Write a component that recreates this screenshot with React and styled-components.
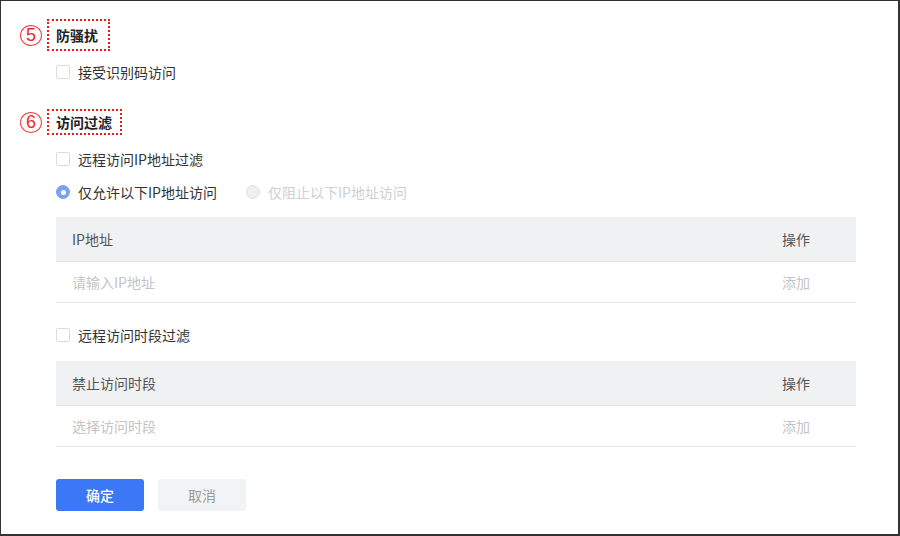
import React from "react";
import styled, { createGlobalStyle } from "styled-components";

const Global = createGlobalStyle`
  html, body { margin: 0; padding: 0; background: #fff; }
  body { font-family: "Noto Sans CJK SC", "Liberation Sans", sans-serif; }
  * { box-sizing: border-box; }
`;

const Frame = styled.div`
  width: 900px;
  height: 536px;
  border-style: solid;
  border-color: #333;
  border-width: 1px 2px 2px 1px;
  background: #fff;
  padding: 18px 0 0 19px;
  overflow: hidden;
`;

const SectionHead = styled.div`
  display: flex;
  align-items: center;
  gap: 5px;
  margin-top: ${(p) => p.$mt || 0}px;
`;

const Num = styled.span`
  width: 22px;
  height: 21px;
  border: 1px solid #f43c3c;
  border-radius: 50%;
  color: #f02828;
  font-family: "Liberation Sans", sans-serif;
  font-size: 18px;
  line-height: 19px;
  display: flex;
  align-items: center;
  justify-content: center;
`;

const TitleBox = styled.div`
  border: 2px dotted #f01818;
  height: ${(p) => p.$h}px;
  padding: 0 ${(p) => p.$pr}px 0 7px;
  display: flex;
  align-items: center;
  font-size: 14px;
  font-weight: 700;
  color: #222;
`;

const Body = styled.div`
  margin-left: 36px;
  width: 800px;
`;

const OptionRow = styled.div`
  display: flex;
  align-items: center;
  height: 20px;
  margin-top: ${(p) => p.$mt || 0}px;
  font-size: 14px;
  color: #333;
`;

const Option = styled.label`
  display: flex;
  align-items: center;
  gap: 8px;
  margin-right: 29px;
  color: ${(p) => (p.$disabled ? "#cfcfcf" : "#333")};
`;

const Check = styled.span`
  width: 14px;
  height: 14px;
  border: 1px solid #dcdcdc;
  border-radius: 2px;
  background: #fff;
`;

const Radio = styled.span`
  width: 14px;
  height: 14px;
  border-radius: 50%;
  display: flex;
  align-items: center;
  justify-content: center;
  background: ${(p) => (p.$on ? "#7aa2f2" : "#efefef")};
  border: 1px solid ${(p) => (p.$on ? "#7aa2f2" : "#e2e2e2")};
  &::after {
    content: "";
    width: 5px;
    height: 5px;
    border-radius: 50%;
    background: ${(p) => (p.$on ? "#fff" : "transparent")};
  }
`;

const Table = styled.div`
  margin-top: ${(p) => p.$mt}px;
  font-size: 14px;
`;

const Row = styled.div`
  display: grid;
  grid-template-columns: 1fr 74px;
  align-items: center;
  height: ${(p) => (p.$head ? 45 : 41)}px;
  padding-left: 16px;
  padding-bottom: 1px;
  background: ${(p) => (p.$head ? "#f0f1f3" : "#fff")};
  border-bottom: 1px solid #e3e4e6;
  color: ${(p) => (p.$head ? "#555" : "#c4c4c4")};
`;

const Actions = styled.div`
  display: flex;
  gap: 14px;
  margin-top: ${(p) => p.$mt}px;
`;

const Button = styled.button`
  width: 88px;
  height: 32px;
  border: none;
  border-radius: 3px;
  font-family: inherit;
  font-size: 14px;
  background: ${(p) => (p.$primary ? "#3b78f6" : "#f2f3f5")};
  color: ${(p) => (p.$primary ? "#fff" : "#9a9a9a")};
  font-weight: ${(p) => (p.$primary ? 500 : 400)};
  padding: 0;
`;

export default function App() {
  return (
    <>
      <Global />
      <Frame>
        <SectionHead>
          <Num>5</Num>
          <TitleBox $h={32} $pr={10}>防骚扰</TitleBox>
        </SectionHead>
        <Body>
          <OptionRow $mt={11}>
            <Option>
              <Check />
              接受识别码访问
            </Option>
          </OptionRow>
        </Body>

        <SectionHead $mt={27}>
          <Num>6</Num>
          <TitleBox $h={26} $pr={8}>访问过滤</TitleBox>
        </SectionHead>
        <Body>
          <OptionRow $mt={14}>
            <Option>
              <Check />
              远程访问IP地址过滤
            </Option>
          </OptionRow>
          <OptionRow $mt={13}>
            <Option>
              <Radio $on />
              仅允许以下IP地址访问
            </Option>
            <Option $disabled>
              <Radio />
              仅阻止以下IP地址访问
            </Option>
          </OptionRow>
          <Table $mt={15}>
            <Row $head>
              <span>IP地址</span>
              <span>操作</span>
            </Row>
            <Row>
              <span>请输入IP地址</span>
              <span>添加</span>
            </Row>
          </Table>
          <OptionRow $mt={22}>
            <Option>
              <Check />
              远程访问时段过滤
            </Option>
          </OptionRow>
          <Table $mt={16}>
            <Row $head>
              <span>禁止访问时段</span>
              <span>操作</span>
            </Row>
            <Row>
              <span>选择访问时段</span>
              <span>添加</span>
            </Row>
          </Table>
          <Actions $mt={32}>
            <Button $primary>确定</Button>
            <Button>取消</Button>
          </Actions>
        </Body>
      </Frame>
    </>
  );
}
